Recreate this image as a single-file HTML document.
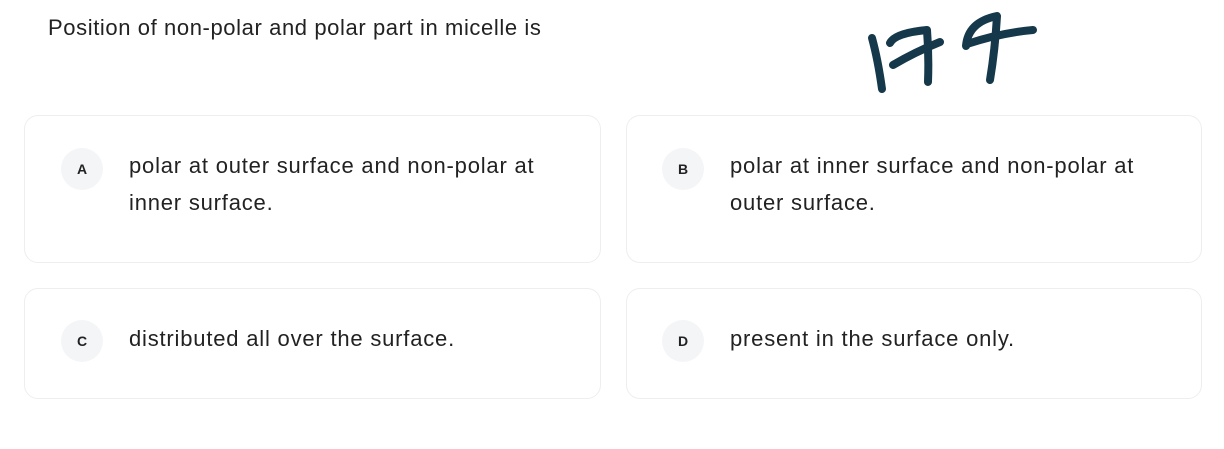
<!DOCTYPE html><html><head><style>
body{margin:0;width:1224px;height:449px;background:#fff;font-family:"Liberation Sans",Arial,sans-serif;position:relative;overflow:hidden}
.q{position:absolute;left:48px;top:15px;font-size:22px;letter-spacing:0.6px;color:#222}
.card{position:absolute;border:1px solid #eeeeee;border-radius:14px;box-sizing:border-box;background:#fff}
.b{position:absolute;width:42px;height:42px;border-radius:50%;background:#f4f5f7;font-weight:bold;font-size:14px;color:#222;text-align:center;line-height:42px}
.t{position:absolute;font-size:22px;letter-spacing:0.8px;color:#222;line-height:37px}
</style></head><body>
<div class="q">Position of non-polar and polar part in micelle is</div>
<svg style="position:absolute;left:0;top:0" width="1224" height="120"><g fill="none" stroke="#15394a" stroke-width="8" stroke-linecap="round" stroke-linejoin="round">
<path d="M872 38 Q878 60 882 89"/>
<path d="M890 43 Q895 33 927 30 Q929 55 928 82"/>
<path d="M893 65 Q915 52 940 42"/>
<path d="M966 46 Q968 22 997 16 Q995 50 990 80"/>
<path d="M967 44 Q1000 33 1033 30"/>
</g></svg>
<div class="card" style="left:24px;top:115px;width:577px;height:148px"></div>
<div class="card" style="left:626px;top:115px;width:576px;height:148px"></div>
<div class="card" style="left:24px;top:288px;width:577px;height:111px"></div>
<div class="card" style="left:626px;top:288px;width:576px;height:111px"></div>
<div class="b" style="left:61px;top:148px">A</div>
<div class="b" style="left:662px;top:148px">B</div>
<div class="b" style="left:61px;top:320px">C</div>
<div class="b" style="left:662px;top:320px">D</div>
<div class="t" style="left:129px;top:147px">polar at outer surface and non-polar at<br>inner surface.</div>
<div class="t" style="left:730px;top:147px">polar at inner surface and non-polar at<br>outer surface.</div>
<div class="t" style="left:129px;top:320px">distributed all over the surface.</div>
<div class="t" style="left:730px;top:320px">present in the surface only.</div>
</body></html>
